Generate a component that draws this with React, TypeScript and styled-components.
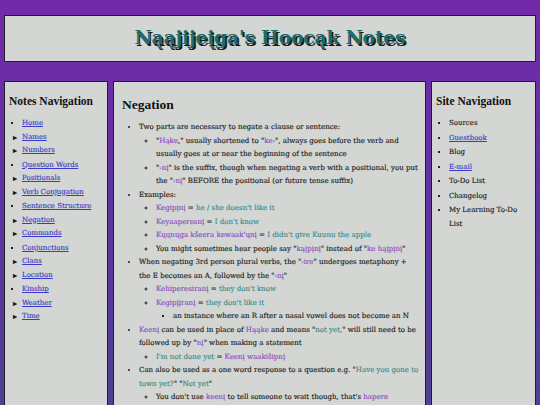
import React from "react";
import styled, { createGlobalStyle } from "styled-components";

const Global = createGlobalStyle`
  html, body { margin: 0; padding: 0; }
  body {
    background: linear-gradient(180deg, #7329a9 0%, #5f35a0 50%, #4b4391 100%);
    min-height: 100vh;
    font-family: "DejaVu Serif", serif;
    color: #222;
  }
`;

const Page = styled.div`
  padding: 15px 4px 0 4px;
  display: flex;
  flex-direction: column;
  gap: 19px;
`;

const Header = styled.header`
  height: 45px;
  background: #d3d6d3;
  border: 1px solid #1f1f2a;
  display: flex;
  align-items: center;
  justify-content: center;
`;

const Title = styled.h1`
  margin: 0 0 3px 0;
  font-family: "DejaVu Serif", serif;
  font-weight: bold;
  font-size: 19px;
  letter-spacing: -0.35px;
  color: #1d6b6b;
  text-shadow: 1.5px 1.5px 0 #1a1a1a;
`;

const Columns = styled.div`
  display: grid;
  grid-template-columns: 104px 313px 105px;
  gap: 5px;
  align-items: stretch;
`;

const Panel = styled.aside`
  background: #d3d6d3;
  border: 1px solid #1f1f2a;
  min-height: 340px;
  padding: 8px 4px;
`;

const PanelTitle = styled.h2<{ $size?: number; $top?: number }>`
  margin: ${(p) => p.$top ?? 4}px 0 8px 0;
  font-family: "Liberation Serif", "DejaVu Serif", serif;
  font-size: ${(p) => p.$size || 11.5}px;
  line-height: 14px;
  font-weight: bold;
  color: #111;
  white-space: nowrap;
`;

const NavList = styled.ul`
  margin: 0;
  padding: 0 0 0 13px;
  font-size: 7px;
  line-height: 13.5px;
  -webkit-text-stroke: 0.15px;
`;

const NavItem = styled.li<{ $tri?: boolean }>`
  list-style: ${(p) => (p.$tri ? "none" : "square")};
  position: relative;
  &::before {
    content: ${(p) => (p.$tri ? '"\\25B8"' : "none")};
    position: absolute;
    left: -9px;
    top: 0;
    font-size: 8px;
    color: #111;
  }
  &::marker { font-size: 6px; }
`;

const NavLink = styled.a`
  color: #3c3cc8;
  text-decoration: underline;
`;

const Plain = styled.span`
  color: #222;
`;

const Main = styled.main`
  background: #d3d6d3;
  border: 1px solid #1f1f2a;
  padding: 8px 5.6px 0 8px;
  min-height: 340px;
`;

const L1 = styled.ul`
  margin: 0;
  padding-left: 17px;
  font-size: 7.05px;
  line-height: 13.5px;
  list-style: disc;
  -webkit-text-stroke: 0.15px;
  & ul { list-style: circle; margin: 0; padding-left: 17px; }
  & ul ul { list-style: square; }
`;

const Hq = styled.span`
  color: #8b4fc2;
`;

const En = styled.span`
  color: #3a8c8c;
`;

const notes = [
  "Home:d", "Names:t", "Numbers:t", "Question Words:d", "Positionals:t",
  "Verb Conjugation:t", "Sentence Structure:d", "Negation:t", "Commands:t",
  "Conjunctions:d", "Clans:t", "Location:t", "Kinship:d", "Weather:t", "Time:t",
];

const site: [string, boolean][] = [
  ["Sources", false], ["Guestbook", true], ["Blog", false], ["E-mail", true],
  ["To-Do List", false], ["Changelog", false], ["My Learning To-Do List", false],
];

export default function App() {
  return (
    <>
      <Global />
      <Page>
        <Header>
          <Title>Nąąjijeįga's Hoocąk Notes</Title>
        </Header>
        <Columns>
          <Panel>
            <PanelTitle>Notes Navigation</PanelTitle>
            <NavList>
              {notes.map((n) => {
                const [label, kind] = n.split(":");
                return (
                  <NavItem key={label} $tri={kind === "t"}>
                    <NavLink href="#">{label}</NavLink>
                  </NavItem>
                );
              })}
            </NavList>
          </Panel>
          <Main>
            <PanelTitle $size={13.5} $top={8}>Negation</PanelTitle>
            <L1>
              <li>
                Two parts are necessary to negate a clause or sentence:
                <ul>
                  <li>"<Hq>Hąke</Hq>," usually shortened to "<Hq>ke-</Hq>", always goes before the verb and usually goes at or near the beginning of the sentence</li>
                  <li>"<Hq>-nį</Hq>" is the suffix, though when negating a verb with a positional, you put the "<Hq>-nį</Hq>" BEFORE the positional (or future tense suffix)</li>
                </ul>
              </li>
              <li>
                Examples:
                <ul>
                  <li><Hq>Kegipįnį</Hq> = <En>he / she doesn't like it</En></li>
                  <li><Hq>Keyaaperesnį</Hq> = <En>I don't know</En></li>
                  <li><Hq>Kųųnųga kšeera kewaak'ųnį</Hq> = <En>I didn't give Kuunu the apple</En></li>
                  <li>You might sometimes hear people say "<Hq>kąįpįnį</Hq>" instead of "<Hq>ke hąįpįnį</Hq>"</li>
                </ul>
              </li>
              <li>
                When negating 3rd person plural verbs, the "<Hq>-ire</Hq>" undergoes metaphony + the E becomes an A, followed by the "<Hq>-nį</Hq>"
                <ul>
                  <li><Hq>Kehiperesiranį</Hq> = <En>they don't know</En></li>
                  <li>
                    <Hq>Kegipįįranį</Hq> = <En>they don't like it</En>
                    <ul>
                      <li>an instance where an R after a nasal vowel does not become an N</li>
                    </ul>
                  </li>
                </ul>
              </li>
              <li>
                <Hq>Keenį</Hq> can be used in place of <Hq>Hąąke</Hq> and means "<En>not yet,</En>" will still need to be followed up by "<Hq>nį</Hq>" when making a statement
                <ul>
                  <li><En>I'm not done yet</En> = <Hq>Keenį waakišipnį</Hq></li>
                </ul>
              </li>
              <li>
                Can also be used as a one word response to a question e.g. "<En>Have you gone to town yet?</En>" "<En>Not yet</En>"
                <ul>
                  <li>You don't use <Hq>keenį</Hq> to tell someone to wait though, that's <Hq>hapere</Hq></li>
                </ul>
              </li>
            </L1>
          </Main>
          <Panel>
            <PanelTitle>Site Navigation</PanelTitle>
            <NavList>
              {site.map(([label, link]) => (
                <NavItem key={label}>
                  {link ? <NavLink href="#">{label}</NavLink> : <Plain>{label}</Plain>}
                </NavItem>
              ))}
            </NavList>
          </Panel>
        </Columns>
      </Page>
    </>
  );
}
